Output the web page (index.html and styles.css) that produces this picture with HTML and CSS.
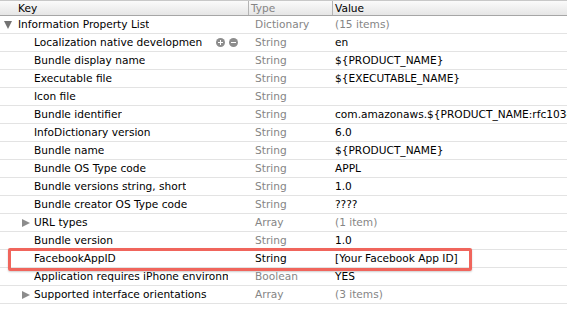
FILE: index.html
```html
<!DOCTYPE html>
<html>
<head>
<meta charset="utf-8">
<link rel="stylesheet" href="styles.css">
</head>
<body>
<div class="plist">
  <div class="row header">
    <div class="cell key">Key</div>
    <div class="cell type">Type</div>
    <div class="cell value">Value</div>
  </div>
  <div class="row">
    <div class="cell key lvl0"><span class="tri down"></span><span class="label">Information Property List</span></div>
    <div class="cell type">Dictionary</div>
    <div class="cell value dim">(15 items)</div>
  </div>
  <div class="row">
    <div class="cell key lvl1"><span class="name">Localization native development region</span><span class="btns"><span class="btn plus"></span><span class="btn minus"></span></span></div>
    <div class="cell type">String</div>
    <div class="cell value">en</div>
  </div>
  <div class="row">
    <div class="cell key lvl1"><span class="label">Bundle display name</span></div>
    <div class="cell type">String</div>
    <div class="cell value">${PRODUCT_NAME}</div>
  </div>
  <div class="row">
    <div class="cell key lvl1"><span class="label">Executable file</span></div>
    <div class="cell type">String</div>
    <div class="cell value">${EXECUTABLE_NAME}</div>
  </div>
  <div class="row">
    <div class="cell key lvl1"><span class="label">Icon file</span></div>
    <div class="cell type">String</div>
    <div class="cell value"></div>
  </div>
  <div class="row">
    <div class="cell key lvl1"><span class="label">Bundle identifier</span></div>
    <div class="cell type">String</div>
    <div class="cell value">com.amazonaws.${PRODUCT_NAME:rfc1034identifier}</div>
  </div>
  <div class="row">
    <div class="cell key lvl1"><span class="label">InfoDictionary version</span></div>
    <div class="cell type">String</div>
    <div class="cell value">6.0</div>
  </div>
  <div class="row">
    <div class="cell key lvl1"><span class="label">Bundle name</span></div>
    <div class="cell type">String</div>
    <div class="cell value">${PRODUCT_NAME}</div>
  </div>
  <div class="row">
    <div class="cell key lvl1"><span class="label">Bundle OS Type code</span></div>
    <div class="cell type">String</div>
    <div class="cell value">APPL</div>
  </div>
  <div class="row">
    <div class="cell key lvl1"><span class="label">Bundle versions string, short</span></div>
    <div class="cell type">String</div>
    <div class="cell value">1.0</div>
  </div>
  <div class="row">
    <div class="cell key lvl1"><span class="label">Bundle creator OS Type code</span></div>
    <div class="cell type">String</div>
    <div class="cell value">????</div>
  </div>
  <div class="row">
    <div class="cell key lvl1 collapsible"><span class="tri right"></span><span class="label">URL types</span></div>
    <div class="cell type">Array</div>
    <div class="cell value dim">(1 item)</div>
  </div>
  <div class="row">
    <div class="cell key lvl1"><span class="label">Bundle version</span></div>
    <div class="cell type">String</div>
    <div class="cell value">1.0</div>
  </div>
  <div class="row highlight">
    <div class="cell key lvl1"><span class="label">FacebookAppID</span></div>
    <div class="cell type strong">String</div>
    <div class="cell value">[Your Facebook App ID]</div>
  </div>
  <div class="row">
    <div class="cell key lvl1"><span class="label">Application requires iPhone environment</span></div>
    <div class="cell type">Boolean</div>
    <div class="cell value">YES</div>
  </div>
  <div class="row">
    <div class="cell key lvl1 collapsible"><span class="tri right"></span><span class="label">Supported interface orientations</span></div>
    <div class="cell type">Array</div>
    <div class="cell value dim">(3 items)</div>
  </div>
</div>
</body>
</html>
```

FILE: styles.css
```css
html, body {
  margin: 0;
  padding: 0;
  background: #ffffff;
}
body {
  font-family: "DejaVu Sans", "Liberation Sans", sans-serif;
  font-size: 10.6px;
  color: #000;
  width: 567px;
  height: 309px;
  overflow: hidden;
}
.plist {
  display: flex;
  flex-direction: column;
}
.row {
  display: grid;
  grid-template-columns: 248px 84px 1fr;
  height: 18px;
  border-bottom: 1px solid #e3e3e3;
  box-sizing: border-box;
  position: relative;
}
.row.header {
  height: 16px;
  background: linear-gradient(#fbfbfb, #e6e6e6);
  border-top: 1px solid #c8c8c8;
  border-bottom: 1px solid #a6a6a6;
}
.cell {
  display: flex;
  align-items: center;
  white-space: nowrap;
  overflow: hidden;
  line-height: 17px;
}
.header .cell {
  line-height: 14px;
}
.header .key {
  padding-left: 18px;
}
.header .type {
  border-left: 1px solid #b4b4b4;
  padding-left: 2px;
}
.header .value {
  border-left: 1px solid #b4b4b4;
  padding-left: 2px;
}
.key {
  padding-right: 20px;
  box-sizing: border-box;
}
.label {
  min-width: 0;
  overflow: hidden;
}
.key.lvl0 {
  padding-left: 4px;
}
.key.lvl1 {
  padding-left: 34px;
}
.key.lvl1.collapsible {
  padding-left: 22px;
}
.tri {
  display: inline-block;
  width: 0;
  height: 0;
  flex: none;
}
.tri.down {
  border-left: 4px solid transparent;
  border-right: 4px solid transparent;
  border-top: 8px solid #737373;
  margin-right: 6px;
}
.tri.right {
  border-top: 4px solid transparent;
  border-bottom: 4px solid transparent;
  border-left: 8px solid #8c8c8c;
  margin-right: 4px;
}
.name {
  overflow: hidden;
  width: 168px;
  flex: none;
}
.btns {
  display: flex;
  gap: 4px;
  margin-left: 14px;
}
.btn {
  width: 9px;
  height: 9px;
  border-radius: 50%;
  background: #8d8d8d;
  position: relative;
}
.btn::before {
  content: "";
  position: absolute;
  left: 2px;
  top: 4px;
  width: 5px;
  height: 1px;
  background: #fff;
}
.btn.plus::after {
  content: "";
  position: absolute;
  left: 4px;
  top: 2px;
  width: 1px;
  height: 5px;
  background: #fff;
}
.type {
  padding-left: 7px;
  color: #858585;
}
.type.strong {
  color: #000;
}
.value {
  padding-left: 3px;
}
.value.dim {
  color: #858585;
}
.highlight::after {
  content: "";
  position: absolute;
  left: 8px;
  top: -2px;
  width: 464px;
  height: 23px;
  box-sizing: border-box;
  border: 3px solid #f0655c;
  border-radius: 2px;
  box-shadow: 0 1px 2px rgba(0, 0, 0, 0.2);
}
```
